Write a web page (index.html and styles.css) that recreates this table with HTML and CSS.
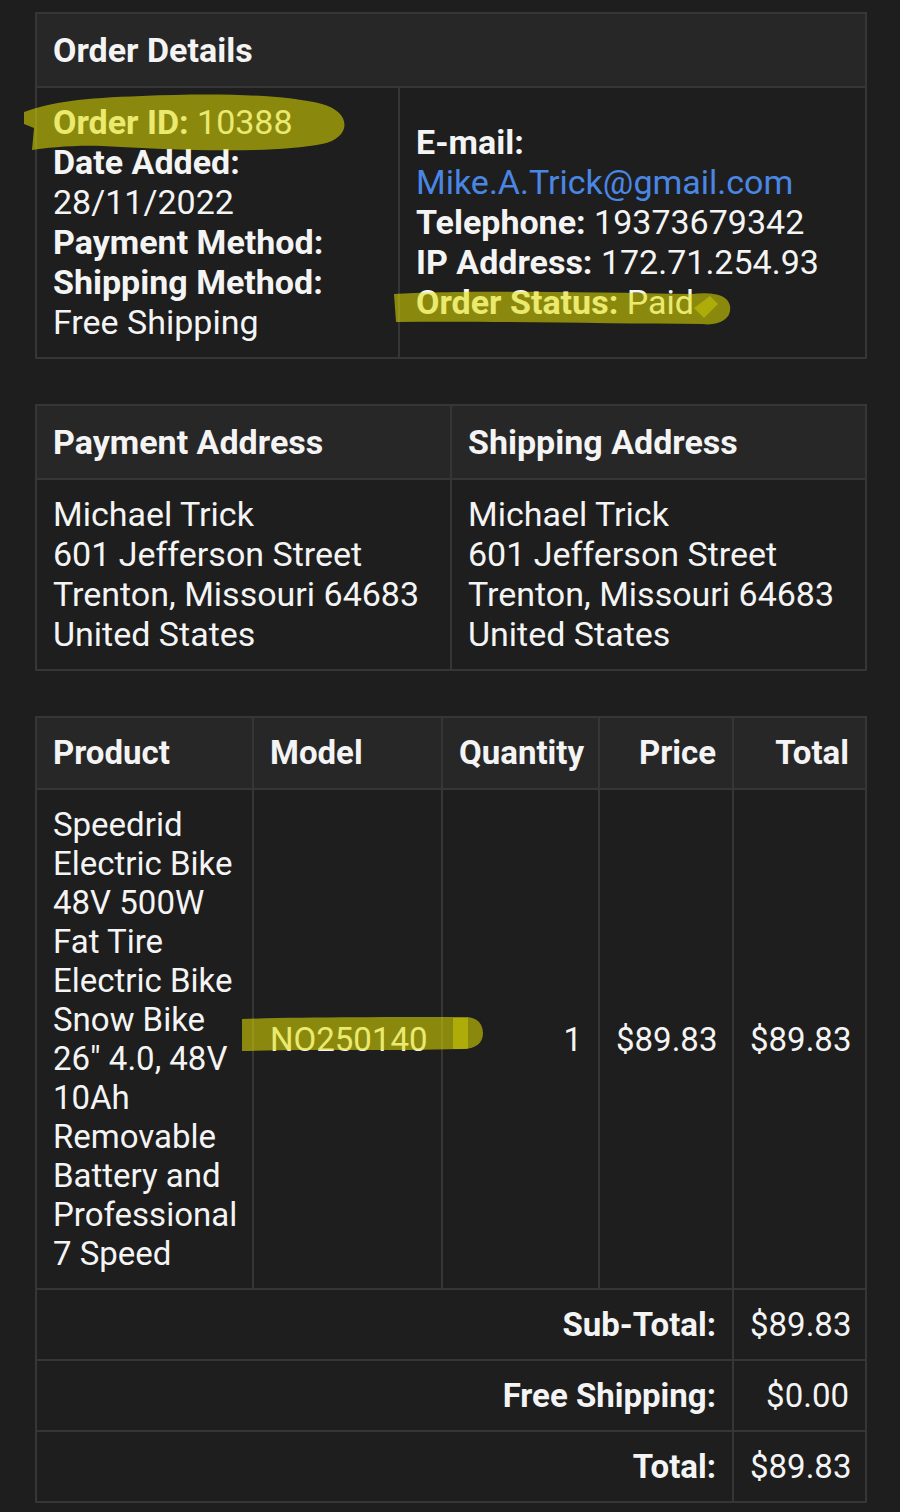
FILE: index.html
```html
<!DOCTYPE html>
<html>
<head>
<meta charset="utf-8">
<link rel="stylesheet" href="styles.css">
</head>
<body>
<div class="page">
  <table class="tbl details">
    <colgroup><col class="c-left"><col class="c-right"></colgroup>
    <thead>
      <tr><th colspan="2">Order Details</th></tr>
    </thead>
    <tbody>
      <tr>
        <td class="left-col">
          <b>Order ID:</b> 10388<br>
          <b>Date Added:</b><br>28/11/2022<br>
          <b>Payment Method:</b><br>
          <b>Shipping Method:</b><br>Free Shipping
        </td>
        <td class="right-col">
          <b>E-mail:</b><br><a class="mail" href="#">Mike.A.Trick@gmail.com</a><br>
          <b>Telephone:</b> 19373679342<br>
          <b>IP Address:</b> 172.71.254.93<br>
          <b>Order Status:</b> Paid
        </td>
      </tr>
    </tbody>
  </table>

  <table class="tbl address">
    <colgroup><col class="c-half"><col class="c-half"></colgroup>
    <thead>
      <tr><th>Payment Address</th><th>Shipping Address</th></tr>
    </thead>
    <tbody>
      <tr>
        <td>Michael Trick<br>601 Jefferson Street<br>Trenton, Missouri 64683<br>United States</td>
        <td>Michael Trick<br>601 Jefferson Street<br>Trenton, Missouri 64683<br>United States</td>
      </tr>
    </tbody>
  </table>

  <table class="tbl products">
    <colgroup>
      <col class="c-prod"><col class="c-model"><col class="c-qty"><col class="c-price"><col class="c-total">
    </colgroup>
    <thead>
      <tr>
        <th>Product</th><th>Model</th><th>Quantity</th><th class="r">Price</th><th class="r">Total</th>
      </tr>
    </thead>
    <tbody>
      <tr class="item">
        <td class="prod">Speedrid Electric Bike 48V 500W Fat Tire Electric Bike Snow Bike 26" 4.0, 48V 10Ah Removable Battery and Professional 7 Speed</td>
        <td>NO250140</td>
        <td class="r">1</td>
        <td class="r">$89.83</td>
        <td class="r">$89.83</td>
      </tr>
    </tbody>
    <tfoot>
      <tr><td colspan="4" class="r lbl">Sub-Total:</td><td class="r">$89.83</td></tr>
      <tr><td colspan="4" class="r lbl">Free Shipping:</td><td class="r">$0.00</td></tr>
      <tr><td colspan="4" class="r lbl">Total:</td><td class="r">$89.83</td></tr>
    </tfoot>
  </table>

  <svg class="hl hl-id" width="330" height="70" viewBox="0 0 330 70">
    <path d="M2 24 C 30 14, 60 10, 120 8 C 190 5, 260 6, 300 16 C 330 24, 330 50, 300 56 C 250 66, 150 62, 80 58 C 50 57, 25 60, 10 62 L 12 40 L 2 36 Z"/>
  </svg>
  <svg class="hl hl-status" width="345" height="46" viewBox="0 0 345 46">
    <path d="M2 10 C 60 6, 200 8, 300 10 C 318 8, 336 10, 338 22 C 340 36, 326 42, 310 40 C 220 40, 120 37, 4 38 Z"/>
    <path d="M302 24 L 318 12 L 326 20 L 312 34 Z" class="bright"/>
  </svg>
  <svg class="hl hl-model" width="245" height="40" viewBox="0 0 245 40">
    <path d="M2 4 C 60 2, 150 2, 225 2 C 240 2, 243 12, 243 18 C 243 28, 236 34, 222 34 C 150 36, 70 34, 2 36 Z"/>
    <rect x="213" y="3" width="15" height="31" class="bright"/>
  </svg>
</div>
</body>
</html>
```
FILE: styles.css
```css
html, body {
  margin: 0;
  padding: 0;
  background: #1e1e1e;
}
body {
  font-family: Roboto, "Noto Sans", "Liberation Sans", sans-serif;
  color: #f4f4f4;
  font-size: 34px;
  line-height: 40px;
}
.page {
  position: relative;
  padding: 12px 35px 10px 35px;
  width: 830px;
}
.tbl {
  width: 830px;
  border-collapse: collapse;
  margin-bottom: 45px;
  table-layout: fixed;
}
.tbl th, .tbl td {
  border: 2px solid #363636;
  padding: 14px 16px 15px 16px;
  text-align: left;
  vertical-align: middle;
}
.tbl th {
  background: #272727;
  font-weight: 700;
  padding-top: 16px;
  padding-bottom: 16px;
}
b { font-weight: 700; }
.c-left { width: 363px; }
.c-right { width: 467px; }
.left-col { vertical-align: top; }
.mail { color: #4a86e4; text-decoration: none; }
.c-half { width: 415px; }
.products {
  margin-bottom: 0;
  font-size: 33px;
  line-height: 39px;
}
.products td { padding-top: 15px; padding-bottom: 15px; }
.products th { padding-top: 15px; padding-bottom: 15px; line-height: 40px; }
.c-prod { width: 217px; }
.c-model { width: 189px; }
.c-qty { width: 157px; }
.c-price { width: 134px; }
.c-total { width: 133px; }
.r { text-align: right !important; }
.tbl .prod { vertical-align: top; padding-right: 10px; }
.lbl { font-weight: 700; }
.hl {
  position: absolute;
  pointer-events: none;
}
.hl path, .hl rect { fill: rgba(228, 226, 0, 0.55); }
.hl .bright { fill: rgba(240, 238, 0, 0.35); }
.hl-id { left: 22px; top: 88px; }
.hl-status { left: 392px; top: 284px; }
.hl-model { left: 240px; top: 1015px; }
```
